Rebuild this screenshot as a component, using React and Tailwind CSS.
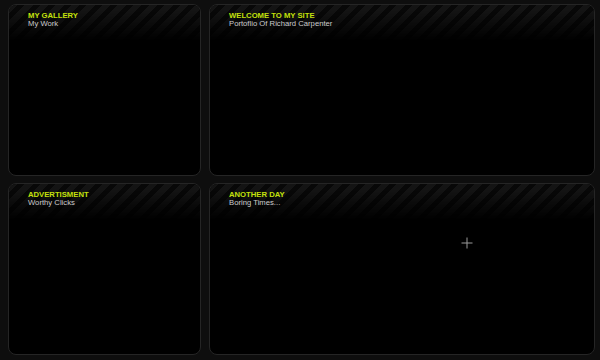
import React from 'react'

const panels = [
  { title: 'MY GALLERY', sub: 'My Work' },
  { title: 'WELCOME TO MY SITE', sub: 'Portoflio Of Richard Carpenter' },
  { title: 'ADVERTISMENT', sub: 'Worthy Clicks' },
  { title: 'ANOTHER DAY', sub: 'Boring Times...' },
]

function Panel({ title, sub, children }) {
  return (
    <div className="relative overflow-hidden rounded-[8px] border border-[#252525] bg-black">
      {/* striped header fading into black */}
      <div className="absolute inset-x-0 top-0 h-[36px] bg-[repeating-linear-gradient(135deg,#141414_0px,#141414_6px,#080808_6px,#080808_11px)] [mask-image:linear-gradient(to_bottom,black_15%,transparent)]" />
      <div className="relative pl-[19px] pt-[7px] font-['Liberation_Sans',Arial,sans-serif] text-[7.7px] leading-[8px]">
        <div className="font-bold text-[#c4e00c]">{title}</div>
        <div className="text-[#cccccc]">{sub}</div>
      </div>
      {children}
    </div>
  )
}

export default function App() {
  return (
    <div className="h-[360px] w-[600px] overflow-hidden bg-[#0e0e0e] pl-2 pt-1">
      <div className="grid grid-cols-[193px_386px] grid-rows-[172px_172px] gap-x-2 gap-y-[7px]">
        <Panel {...panels[0]} />
        <Panel {...panels[1]} />
        <Panel {...panels[2]} />
        <Panel {...panels[3]}>
          <svg className="absolute left-[251px] top-[53px]" width="12" height="12" viewBox="0 0 12 12">
            <path d="M6 0.5V11.5M0.5 6H11.5" stroke="#9a9a9a" strokeWidth="1" />
          </svg>
        </Panel>
      </div>
    </div>
  )
}
